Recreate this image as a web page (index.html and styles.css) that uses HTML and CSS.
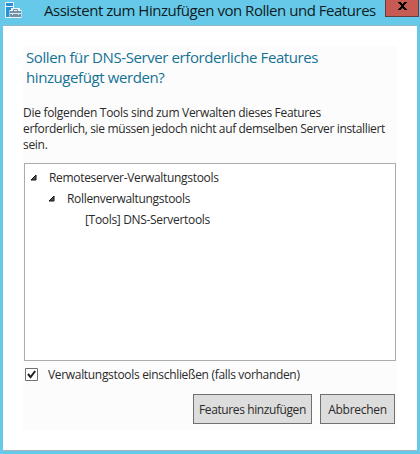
FILE: index.html
```html
<!DOCTYPE html>
<html lang="de">
<head>
<meta charset="utf-8">
<title>Assistent zum Hinzufügen von Rollen und Features</title>
<link rel="stylesheet" href="styles.css">
</head>
<body>
<div class="window">
  <header class="titlebar">
    <svg class="app-icon" width="18" height="18" viewBox="0 0 18 18">
      <path d="M1.500 1.500h8v15h-8z" fill="#2a8fd6" stroke="#e8f6fc"/>
      <path d="M2 5.500h7" stroke="#e8f6fc"/>
      <path d="M5.500 9h12v8h-12z" fill="#e8f6fc"/>
      <path d="M8.500 10V8.500h6V10" fill="none" stroke="#e8f6fc" stroke-width="3"/>
      <path d="M6 10h11v6H6z" fill="#7890a4"/>
      <path d="M9.500 10V8.500h4V10" fill="none" stroke="#7890a4"/>
      <path d="M6 12.500h11M8.500 12v2M14.500 12v2" stroke="#dcebf2"/>
    </svg>
    <h1 class="title">Assistent zum Hinzufügen von Rollen und Features</h1>
    <button class="close" aria-label="Schließen">
      <svg width="9" height="8" viewBox="0 0 9 8"><path d="M0 0h3v1h1v1h1V1h1V0h3v1H8v1H7v1H6v2h1v1h1v1h1v1H6V7H5V6H4v1H3v1H0V7h1V6h1V5h1V3H2V2H1V1H0z"/></svg>
    </button>
  </header>
  <main class="client">
    <section class="panel">
      <h2 class="heading">Sollen für DNS-Server erforderliche Features<br>hinzugefügt werden?</h2>
      <p class="intro">Die folgenden Tools sind zum Verwalten dieses Features<br><span class="tight">erforderlich, sie müssen jedoch nicht auf demselben Server installiert</span><br>sein.</p>
      <div class="tree">
        <div class="node"><svg class="arrow" width="7" height="7" viewBox="0 0 7 7"><path d="M6 1v5H1z" fill="#555" stroke="#111"/></svg><span>Remoteserver-Verwaltungstools</span></div>
        <div class="node level-2"><svg class="arrow" width="7" height="7" viewBox="0 0 7 7"><path d="M6 1v5H1z" fill="#555" stroke="#111"/></svg><span>Rollenverwaltungstools</span></div>
        <div class="node level-3"><span>[Tools] DNS-Servertools</span></div>
      </div>
      <label class="check"><svg class="box" width="13" height="13" viewBox="0 0 13 13"><path d="M.5.5h12v12H.5z" fill="#fff" stroke="#707070"/><path d="M3 6l2.600 3.200L10.200 3" fill="none" stroke="#222" stroke-width="2"/></svg><span>Verwaltungstools einschließen (falls vorhanden)</span></label>
      <div class="actions">
        <button class="btn add">Features hinzufügen</button>
        <button class="btn cancel">Abbrechen</button>
      </div>
    </section>
  </main>
</div>
</body>
</html>
```
FILE: styles.css
```css
* { box-sizing: border-box; }
body { margin: 0; font-family: "Open Sans", "Noto Sans", sans-serif; font-size: 12px; color: #2a2a2a; }
h1, h2, p { margin: 0; font-weight: 400; white-space: nowrap; }
svg { display: block; flex: none; }
button { font: inherit; color: inherit; margin: 0; padding: 0; border-radius: 0; white-space: nowrap; }
.window { width: 420px; height: 454px; padding: 0 3px 3px; background: #66c9e9; }
.titlebar { display: flex; height: 25px; padding-left: 1px; }
.app-icon { margin-top: 1px; }
.title { width: 341px; margin-left: 22px; font-size: 15px; line-height: 20px; letter-spacing: -0.47px; color: #101c22; }
.close { display: flex; justify-content: center; width: 34px; height: 17px; margin-right: -2px; padding-top: 2px; border: 1px solid #653d3d; border-top: 0; background: #c75b54; flex: none; }
.client { width: 414px; height: 426px; padding: 20px 20px 0; border-top: 1px solid #8fb9c7; border-bottom: 1px solid #a9b5b9; background: #fff; }
.panel { width: 374px; height: 384px; background: #fcfcfc; }
.heading { padding: 1px 0 0 3px; font-size: 15px; line-height: 20px; letter-spacing: -0.41px; color: #147294; }
.intro { height: 76px; padding-top: 18px; line-height: 16px; letter-spacing: -0.3px; }
.tight { letter-spacing: -0.355px; }
.tree { width: 372px; height: 198px; margin-left: 1px; padding: 3px 0 0 5px; border: 1px solid #acacac; background: #fff; }
.node { display: flex; align-items: center; height: 21px; white-space: nowrap; }
.node span { margin-left: 12px; letter-spacing: -0.32px; }
.level-2 { padding-left: 18px; }
.level-3 { padding-left: 43px; }
.check { display: flex; align-items: center; height: 27px; padding-left: 2px; white-space: nowrap; }
.check span { margin-left: 10px; letter-spacing: -0.32px; }
.actions { display: flex; justify-content: flex-end; gap: 8px; padding: 6px 2px 0 0; }
.btn { height: 30px; border: 1px solid #707070; background: #ddd; letter-spacing: -0.4px; }
.add { width: 119px; }
.cancel { width: 75px; letter-spacing: -0.3px; }
```
